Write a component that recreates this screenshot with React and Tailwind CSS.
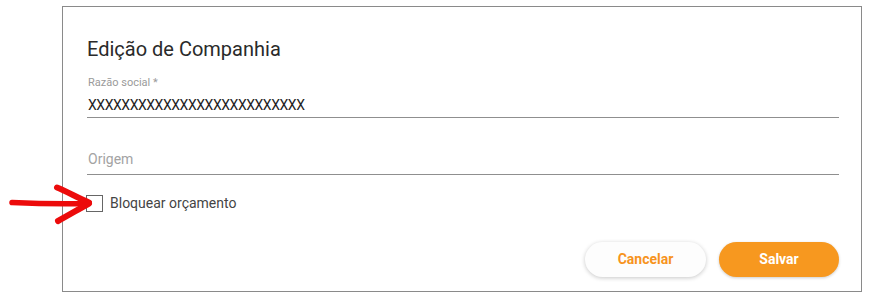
import React from "react";

function RedArrow() {
  return (
    <svg
      className="absolute left-0 top-[179px]"
      width="100"
      height="48"
      viewBox="0 0 100 48"
      fill="none"
    >
      <path
        d="M12 23.5 C 35 24.5, 60 25, 86 24.5"
        stroke="#ec0b0b"
        strokeWidth="5.5"
        strokeLinecap="round"
      />
      <path
        d="M57 8.5 C 68 13, 78 19, 89 23.5"
        stroke="#ec0b0b"
        strokeWidth="6"
        strokeLinecap="round"
      />
      <path
        d="M89 24.5 C 79 30, 69 36, 58 42"
        stroke="#ec0b0b"
        strokeWidth="6"
        strokeLinecap="round"
      />
    </svg>
  );
}

export default function App() {
  return (
    <div className="relative w-[869px] h-[306px] bg-white pt-[6px] pl-[62px] font-['Roboto',sans-serif]">
      <div className="w-[800px] border border-[#8a8a8a] bg-white pt-[30px] pl-[24px] pr-[22px] pb-[14px]">
        <h1 className="text-[20px] leading-[24px] text-[#2a2a2a]">
          Edição de Companhia
        </h1>

        <div className="mt-[15px]">
          <label className="block text-[11px] leading-[14px] text-[#9a9a9a] pl-px">
            Razão social *
          </label>
          <div className="mt-[5px] pb-[2px] border-b border-[#8f8f8f]">
            <div className="text-[14px] leading-[20px] text-[#222] tracking-[-0.45px] pl-px">
              XXXXXXXXXXXXXXXXXXXXXXXXXX
            </div>
          </div>
        </div>

        <div className="mt-[31px] pb-[5px] border-b border-[#8f8f8f]">
          <div className="text-[14px] leading-[20px] text-[#a3a3a3] pl-px">
            Origem
          </div>
        </div>

        <label className="mt-[18px] -ml-px flex items-center gap-[7px] w-fit">
          <span className="w-[17px] h-[17px] border border-[#666] bg-white" />
          <span className="text-[14px] leading-[20px] text-[#444]">
            Bloquear orçamento
          </span>
        </label>

        <div className="mt-[29px] flex justify-end gap-[13px]">
          <button className="w-[121px] h-[35px] rounded-full bg-[#fdfdfd] shadow-[0_1px_4px_rgba(0,0,0,0.22)] text-[14px] font-bold text-[#f7941d]">
            Cancelar
          </button>
          <button className="w-[120px] h-[35px] rounded-full bg-[#f7981f] shadow-[0_1px_3px_rgba(0,0,0,0.2)] text-[14px] font-bold text-white">
            Salvar
          </button>
        </div>
      </div>
      <RedArrow />
    </div>
  );
}
